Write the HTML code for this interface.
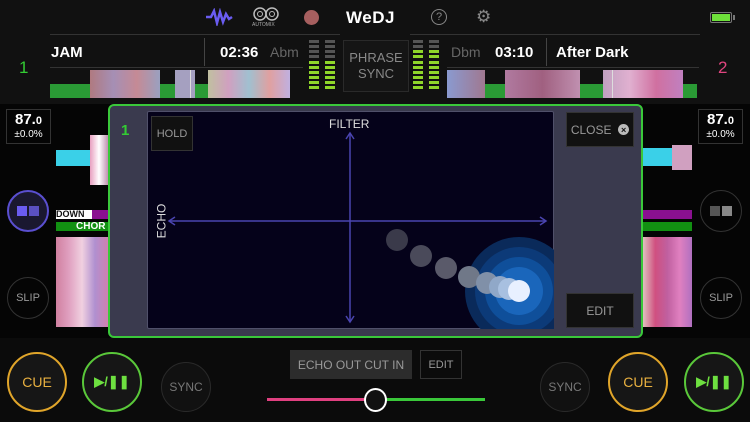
<!DOCTYPE html>
<html><head><meta charset="utf-8"><style>
*{margin:0;padding:0;box-sizing:border-box}
body{width:750px;height:422px;background:#0b0b0b;font-family:"Liberation Sans",sans-serif;position:relative;overflow:hidden;color:#fff}
.a{position:absolute}
.circ{position:absolute;border-radius:50%;display:flex;align-items:center;justify-content:center;font-size:13px}
.box{position:absolute;display:flex;align-items:center;justify-content:center}
</style></head><body>
<div class="a" style="left:0;top:0;width:750px;height:104px;background:#111"></div>
<svg class="a" style="top:8px;left:205px" width="28" height="18"><path d="M1 9 L6 9 L9 3 L12 15 L15 4 L18 14 L21 6 L24 11 L27 9" stroke="#6a5cf0" stroke-width="2.5" fill="none"/></svg>
<svg class="a" style="left:253px;top:7px" width="26" height="14"><circle cx="7" cy="7" r="6" stroke="#bbb" fill="none" stroke-width="1.5"/><circle cx="7" cy="7" r="2.5" stroke="#bbb" fill="none"/><circle cx="19" cy="7" r="6" stroke="#bbb" fill="none" stroke-width="1.5"/><circle cx="19" cy="7" r="2.5" stroke="#bbb" fill="none"/></svg>
<div class="a" style="left:252px;top:22px;font-size:5px;color:#aaa">AUTOMIX</div>
<div class="circ" style="left:304px;top:10px;width:15px;height:15px;background:#a65f5f"></div>
<div class="a" style="left:346px;top:8px;font-size:17px;font-weight:bold;letter-spacing:0.5px">WeDJ</div>
<div class="circ" style="left:431px;top:9px;width:16px;height:16px;border:1.2px solid #888;color:#888;font-size:11px">?</div>
<div class="a" style="left:476px;top:7px;font-size:17px;color:#888">⚙</div>
<div class="a" style="left:710px;top:12px;width:22px;height:11px;border:1px solid #777;border-radius:2px;padding:1px"><div style="width:100%;height:100%;background:#6ee03a"></div></div>
<div class="a" style="left:733px;top:15px;width:2px;height:5px;background:#777"></div>
<div class="a" style="left:50px;top:34px;width:290px;height:1px;background:#333"></div>
<div class="a" style="left:410px;top:34px;width:290px;height:1px;background:#333"></div>
<div class="a" style="left:51px;top:44px;font-size:15px;font-weight:bold">JAM</div>
<div class="a" style="left:204px;top:38px;width:1px;height:28px;background:#444"></div>
<div class="a" style="left:220px;top:44px;font-size:15px;font-weight:bold">02:36</div>
<div class="a" style="left:270px;top:44px;font-size:14px;color:#666">Abm</div>
<div class="a" style="left:451px;top:44px;font-size:14px;color:#666">Dbm</div>
<div class="a" style="left:495px;top:44px;font-size:15px;font-weight:bold">03:10</div>
<div class="a" style="left:546px;top:38px;width:1px;height:28px;background:#444"></div>
<div class="a" style="left:556px;top:44px;font-size:15px;font-weight:bold">After Dark</div>
<div class="a" style="left:50px;top:67px;width:253px;height:1px;background:#333"></div>
<div class="a" style="left:447px;top:67px;width:252px;height:1px;background:#333"></div>
<div class="a" style="left:19px;top:58px;font-size:17px;color:#3c3">1</div>
<div class="a" style="left:718px;top:58px;font-size:17px;color:#e0457f">2</div>
<div class="box" style="left:343px;top:40px;width:66px;height:52px;background:#151515;border:1px solid #2a2a2a;color:#888;font-size:13px;text-align:center;line-height:16px">PHRASE<br>SYNC</div>
<svg class="a" style="left:309px;top:40px" width="28" height="54">
<g fill="#555"><rect x="0" y="0" width="10" height="3"/><rect x="0" y="5" width="10" height="3"/><rect x="0" y="10" width="10" height="3"/><rect x="0" y="15" width="10" height="3"/><rect x="16" y="0" width="10" height="3"/><rect x="16" y="5" width="10" height="3"/><rect x="16" y="10" width="10" height="3"/><rect x="16" y="15" width="10" height="3"/></g>
<g fill="#8fd62a"><rect x="0" y="21" width="10" height="3"/><rect x="0" y="26" width="10" height="3"/><rect x="0" y="31" width="10" height="3"/><rect x="0" y="36" width="10" height="3"/><rect x="0" y="41" width="10" height="3"/><rect x="0" y="46" width="10" height="3"/><rect x="16" y="21" width="10" height="3"/><rect x="16" y="26" width="10" height="3"/><rect x="16" y="31" width="10" height="3"/><rect x="16" y="36" width="10" height="3"/><rect x="16" y="41" width="10" height="3"/><rect x="16" y="46" width="10" height="3"/></g></svg>
<svg class="a" style="left:413px;top:40px" width="28" height="54">
<g fill="#555"><rect x="0" y="0" width="10" height="3"/><rect x="0" y="5" width="10" height="3"/><rect x="16" y="0" width="10" height="3"/><rect x="16" y="5" width="10" height="3"/></g>
<g fill="#8fd62a"><rect x="0" y="10" width="10" height="3"/><rect x="0" y="15" width="10" height="3"/><rect x="0" y="21" width="10" height="3"/><rect x="0" y="26" width="10" height="3"/><rect x="0" y="31" width="10" height="3"/><rect x="0" y="36" width="10" height="3"/><rect x="0" y="41" width="10" height="3"/><rect x="0" y="46" width="10" height="3"/><rect x="16" y="10" width="10" height="3"/><rect x="16" y="15" width="10" height="3"/><rect x="16" y="21" width="10" height="3"/><rect x="16" y="26" width="10" height="3"/><rect x="16" y="31" width="10" height="3"/><rect x="16" y="36" width="10" height="3"/><rect x="16" y="41" width="10" height="3"/><rect x="16" y="46" width="10" height="3"/></g></svg>
<div class="a" style="left:50px;top:84px;width:240px;height:14px;background:#2a9a35"></div>
<div class="a" style="left:90px;top:70px;width:70px;height:28px;background:linear-gradient(90deg,#b07a80,#a58fb5,#c58a95,#9aa0c0)"></div>
<div class="a" style="left:175px;top:70px;width:20px;height:28px;background:#a5a0c0"></div>
<div class="a" style="left:208px;top:70px;width:82px;height:28px;background:linear-gradient(90deg,#c0c0a0,#d0a0c0,#a0c0d0,#e0a0a0,#c0b0e0)"></div>
<div class="a" style="left:190px;top:70px;width:1px;height:28px;background:#ddd"></div>
<div class="a" style="left:447px;top:84px;width:250px;height:14px;background:#2a9a35"></div>
<div class="a" style="left:447px;top:70px;width:38px;height:28px;background:linear-gradient(90deg,#8a9ad0,#a07890)"></div>
<div class="a" style="left:505px;top:70px;width:75px;height:28px;background:linear-gradient(90deg,#b07aa0,#a06080,#c090b0)"></div>
<div class="a" style="left:603px;top:70px;width:80px;height:28px;background:linear-gradient(90deg,#c0a0c0,#e0b0d0,#d070a0,#c080c0)"></div>
<div class="a" style="left:612px;top:70px;width:1px;height:28px;background:#ddd"></div>
<div class="a" style="left:0;top:104px;width:750px;height:234px;background:#050505"></div>
<div class="box" style="left:6px;top:109px;width:45px;height:35px;border:1px solid #333;flex-direction:column;line-height:13px"><span style="font-size:15px;font-weight:bold">87.<small style="font-size:11px">0</small></span><span style="font-size:10px">±0.0%</span></div>
<div class="box" style="left:698px;top:109px;width:45px;height:35px;border:1px solid #333;flex-direction:column;line-height:13px"><span style="font-size:15px;font-weight:bold">87.<small style="font-size:11px">0</small></span><span style="font-size:10px">±0.0%</span></div>
<div class="circ" style="left:7px;top:190px;width:42px;height:42px;border:2px solid #5a4fd0;background:#1a1830"><div style="width:10px;height:10px;background:#6a5cf0;margin-right:2px"></div><div style="width:10px;height:10px;background:#5a50c0"></div></div>
<div class="circ" style="left:700px;top:190px;width:42px;height:42px;border:1.5px solid #333"><div style="width:10px;height:10px;background:#555;margin-right:2px"></div><div style="width:10px;height:10px;background:#888"></div></div>
<div class="circ" style="left:7px;top:277px;width:42px;height:42px;border:1.5px solid #333;color:#999;font-size:11px">SLIP</div>
<div class="circ" style="left:700px;top:277px;width:42px;height:42px;border:1.5px solid #333;color:#999;font-size:11px">SLIP</div>
<div class="a" style="left:56px;top:150px;width:35px;height:16px;background:#3ad0e8"></div>
<div class="a" style="left:90px;top:135px;width:18px;height:50px;background:linear-gradient(90deg,#e8a0c0,#fff,#c090b0)"></div>
<div class="a" style="left:56px;top:210px;width:52px;height:9px;background:#8a1090"></div>
<div class="a" style="left:56px;top:210px;width:36px;height:9px;background:#fff;color:#111;font-size:9px;font-weight:bold;line-height:9px">DOWN</div>
<div class="a" style="left:56px;top:222px;width:52px;height:9px;background:#129012;font-size:10px;font-weight:bold;line-height:9px;padding-left:20px">CHOR</div>
<div class="a" style="left:56px;top:237px;width:52px;height:90px;background:linear-gradient(90deg,#d080a0,#e0a0c0,#f0d0e0,#b090d0,#d080b0)"></div>
<div class="a" style="left:643px;top:148px;width:30px;height:18px;background:#3ad0e8"></div>
<div class="a" style="left:672px;top:145px;width:20px;height:25px;background:#d0a0c0"></div>
<div class="a" style="left:643px;top:210px;width:49px;height:9px;background:#8a1090"></div>
<div class="a" style="left:643px;top:222px;width:49px;height:9px;background:#129012"></div>
<div class="a" style="left:643px;top:237px;width:49px;height:90px;background:linear-gradient(90deg,#e0c0c0,#d05080,#c060a0,#e080c0,#b070c0)"></div>
<div class="a" style="left:108px;top:104px;width:535px;height:234px;border:2px solid #3ac83a;border-radius:6px;background:#3a3a4e"></div>
<div class="a" style="left:121px;top:122px;font-size:15px;font-weight:bold;color:#3c3">1</div>
<div class="a" style="left:147px;top:111px;width:407px;height:218px;background:#05021a;border:1px solid #50506a;border-radius:2px"></div>
<div class="box" style="left:151px;top:116px;width:42px;height:35px;background:#111;border:1px solid #333;color:#999;font-size:11px">HOLD</div>
<div class="box" style="left:566px;top:112px;width:68px;height:35px;background:#111;border:1px solid #333;color:#999;font-size:12px">CLOSE&nbsp;&nbsp;<span style="display:inline-flex;width:11px;height:11px;border-radius:50%;background:#bbb;color:#111;font-size:9px;align-items:center;justify-content:center;font-weight:bold">×</span></div>
<div class="box" style="left:566px;top:293px;width:68px;height:35px;background:#111;border:1px solid #333;color:#999;font-size:12px">EDIT</div>
<div class="a" style="left:329px;top:117px;font-size:12px;color:#ddd">FILTER</div>
<div class="a" style="left:144px;top:214px;font-size:12px;color:#ddd;transform:rotate(-90deg)">ECHO</div>
<svg class="a" style="left:147px;top:111px" width="407" height="218">
<g stroke="#4a44b0" stroke-width="1.5" fill="none">
<line x1="203" y1="22" x2="203" y2="211"/><path d="M199 28 L203 22 L207 28 M199 205 L203 211 L207 205"/>
<line x1="22" y1="110" x2="399" y2="110"/><path d="M28 106 L22 110 L28 114 M393 106 L399 110 L393 114"/></g>
<circle cx="250" cy="129" r="11" fill="#3a3a4a"/>
<circle cx="274" cy="145" r="11" fill="#4a4a5a"/>
<circle cx="299" cy="157" r="11" fill="#5a5a6a"/>
<circle cx="372" cy="180" r="54" fill="#0a2a5a"/>
<circle cx="372" cy="180" r="44" fill="#0c3a78"/>
<circle cx="372" cy="180" r="34" fill="#0f4f9a"/>
<circle cx="372" cy="180" r="24" fill="#1a66bb"/>
<circle cx="322" cy="166" r="11" fill="#707888"/>
<circle cx="340" cy="172" r="11" fill="#8090a8"/>
<circle cx="353" cy="176" r="11" fill="#90a8c8"/>
<circle cx="362" cy="178" r="11" fill="#a8c0e0"/>
<circle cx="372" cy="180" r="11" fill="#e8f0ff"/>
</svg>
<div class="circ" style="left:7px;top:352px;width:60px;height:60px;border:2px solid #e0a52a;background:#161616;color:#e8b040;font-size:14px">CUE</div>
<div class="circ" style="left:608px;top:352px;width:60px;height:60px;border:2px solid #e0a52a;background:#161616;color:#e8b040;font-size:14px">CUE</div>
<div class="circ" style="left:82px;top:352px;width:60px;height:60px;border:2px solid #5ac83a;background:#161616;color:#6ee040;font-size:13px;font-weight:bold">▶/❚❚</div>
<div class="circ" style="left:684px;top:352px;width:60px;height:60px;border:2px solid #5ac83a;background:#161616;color:#6ee040;font-size:13px;font-weight:bold">▶/❚❚</div>
<div class="circ" style="left:161px;top:362px;width:50px;height:50px;border:1.5px solid #2a2a2a;background:#111;color:#777;font-size:12px">SYNC</div>
<div class="circ" style="left:540px;top:362px;width:50px;height:50px;border:1.5px solid #2a2a2a;background:#111;color:#777;font-size:12px">SYNC</div>
<div class="box" style="left:290px;top:350px;width:122px;height:29px;background:#2c2c2c;color:#999;font-size:12px">ECHO OUT CUT IN</div>
<div class="box" style="left:420px;top:350px;width:42px;height:29px;border:1px solid #333;color:#999;font-size:11px">EDIT</div>
<div class="a" style="left:267px;top:398px;width:108px;height:3px;background:#e04080"></div>
<div class="a" style="left:375px;top:398px;width:110px;height:3px;background:#3ac83a"></div>
<div class="circ" style="left:364px;top:388px;width:23px;height:24px;border:2px solid #fff;background:#111"></div>
</body></html>
